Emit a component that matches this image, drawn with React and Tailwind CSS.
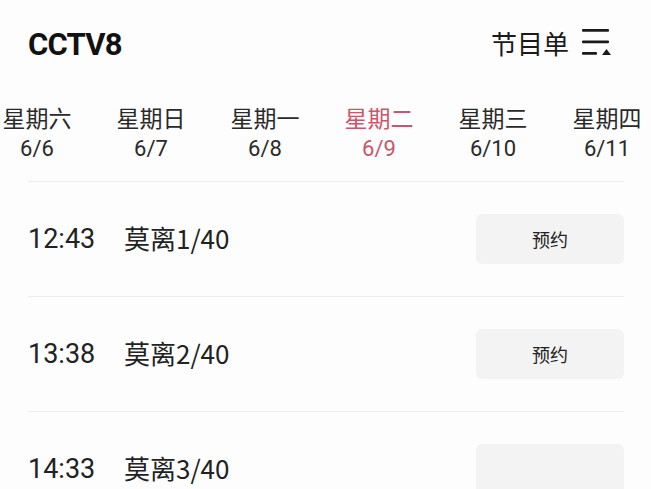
import React from "react";

const days = [
  { w: "星期六", d: "6/6" },
  { w: "星期日", d: "6/7" },
  { w: "星期一", d: "6/8" },
  { w: "星期二", d: "6/9", active: true },
  { w: "星期三", d: "6/10" },
  { w: "星期四", d: "6/11" },
];

const shows = [
  { time: "12:43", title: "莫离1/40" },
  { time: "13:38", title: "莫离2/40" },
  { time: "14:33", title: "莫离3/40", hideLabel: true },
];

const roboto = { fontFamily: 'Roboto, "Noto Sans CJK SC", sans-serif' };

const ListIcon = () => (
  <svg width="32" height="28" viewBox="0 0 32 28" className="text-[#1a1a1a]">
    <rect x="1" y="1" width="27" height="2.8" rx="1" fill="currentColor" />
    <rect x="1" y="12.5" width="27" height="2.8" rx="1" fill="currentColor" />
    <rect x="1" y="24" width="15" height="2.8" rx="1" fill="currentColor" />
    <polygon points="21,27 25.5,21 30,27" fill="currentColor" />
  </svg>
);

export default function App() {
  return (
    <div
      className="w-[651px] h-[489px] overflow-hidden bg-[#fdfdfd] text-[#222]"
      style={{ fontFamily: '"Noto Sans CJK SC", Roboto, sans-serif' }}
    >
      <div className="flex items-center justify-between pl-[28px] pr-[38px] h-[90px] pb-[2px]">
        <div className="text-[31px] font-bold tracking-tight text-[#111] mt-[2px]" style={roboto}>
          CCTV8
        </div>
        <div className="flex items-center gap-[12px] -mt-[4px]">
          <span className="text-[26px] text-[#1a1a1a]">节目单</span>
          <ListIcon />
        </div>
      </div>

      <div className="flex -ml-[20px] w-[684px] h-[91px] pt-[12px]">
        {days.map((x) => (
          <div
            key={x.d}
            className={`w-[114px] flex flex-col items-center leading-[31px] ${
              x.active ? "text-[#c9566a]" : "text-[#2a2a2a]"
            }`}
          >
            <span className="text-[23px]">{x.w}</span>
            <span className="text-[22px]" style={roboto}>{x.d}</span>
          </div>
        ))}
      </div>

      <div className="ml-[28px] mr-[27px]">
        {shows.map((s) => (
          <div key={s.time} className="border-t border-[#ececec] h-[115px] pt-[32px]">
            <div className="flex items-center h-[50px]">
              <span className="text-[27px] leading-none w-[96px]" style={roboto}>
                {s.time}
              </span>
              <span className="text-[26px] leading-none text-[#222] pb-[2px]">{s.title}</span>
              <div className="ml-auto w-[148px] h-[50px] rounded-[6px] bg-[#f3f3f3] flex items-center justify-center text-[18px] text-[#222]">
                {s.hideLabel ? "" : "预约"}
              </div>
            </div>
          </div>
        ))}
      </div>
    </div>
  );
}
